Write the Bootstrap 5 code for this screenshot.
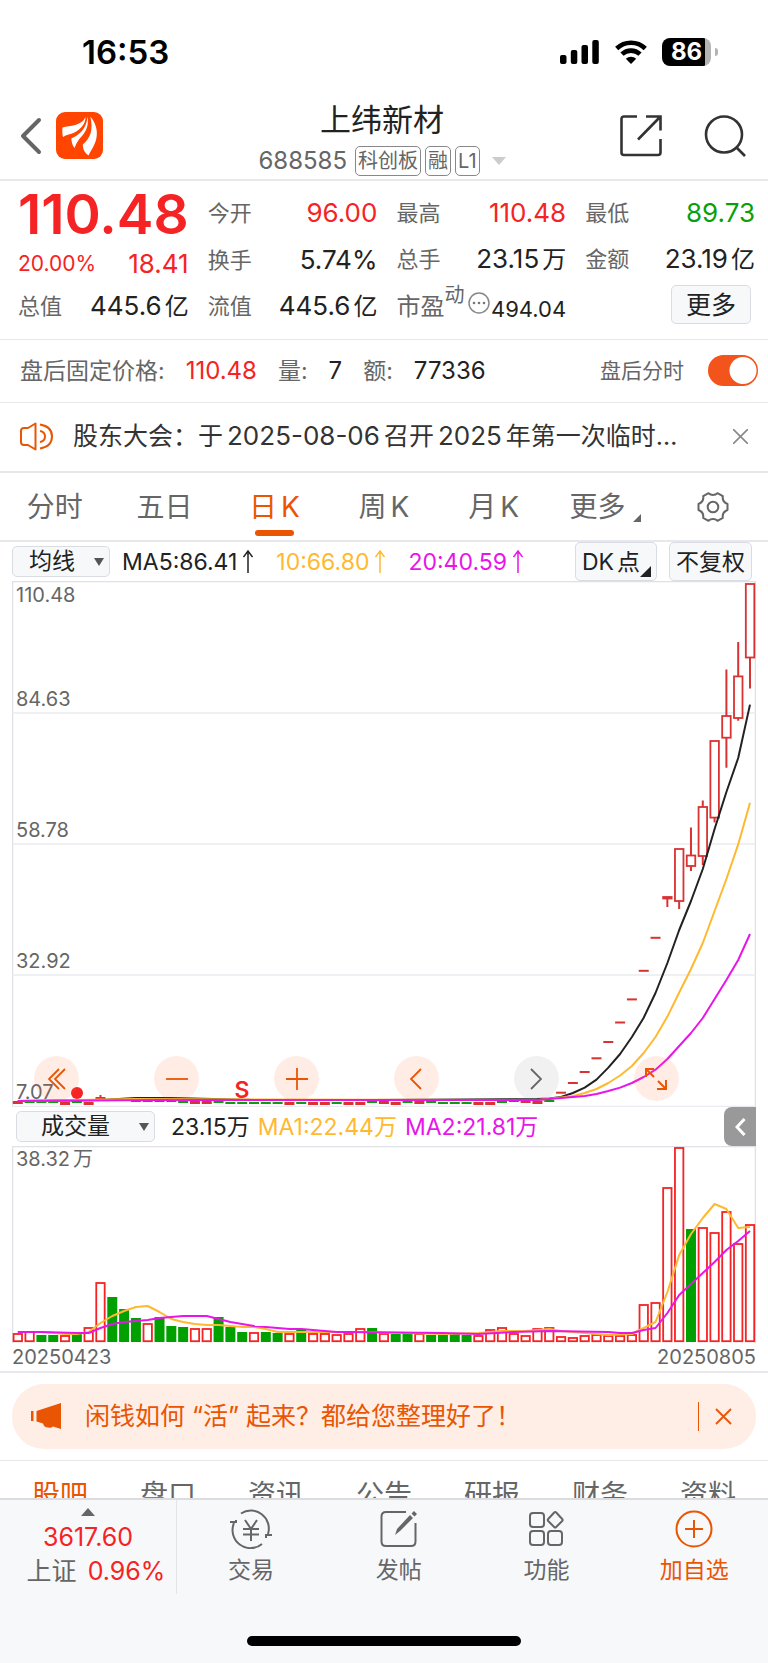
<!DOCTYPE html>
<html lang="zh-CN">
<head>
<meta charset="utf-8">
<meta name="viewport" content="width=device-width, initial-scale=1">
<title>上纬新材 688585</title>
<link rel="stylesheet" href="https://cdn.jsdelivr.net/npm/bootstrap@5.3.0/dist/css/bootstrap.min.css">
<style>
:root{--ink:#222;--grey:#666;--line:#e8e8ec;--up:#f52323;--down:#0a9f0a;--brand:#ea5504;--soft:#f7f8fa;--ma10:#ffb930;--ma20:#e815e8}
body{font-family:Inter,"Noto Sans CJK SC",sans-serif;font-size:23px;line-height:30px;color:var(--ink);background:#fff}
a{color:inherit;text-decoration:none}
svg{display:block;flex-shrink:0}
button,select{color:inherit;font:inherit}
.t-grey{color:var(--grey)}.t-up{color:var(--up)}.t-down{color:var(--down)}.t-brand{color:var(--brand)}
.t-ma10{color:var(--ma10)}.t-ma20{color:var(--ma20)}
.fs-s{font-size:20px}.fs-xm{font-size:21px}.fs-m{font-size:22px}.fs-n{font-size:24px}.fs-l{font-size:25px}
.unit{margin-left:3px}
.rule{border-bottom:1px solid var(--line)}
.rule-2{border-bottom:2px solid var(--line)}
.plain{background:none;border:0;padding:0}
.scroller{flex:1 1 0;min-height:0;overflow-y:auto;scrollbar-width:none}
.scroller::-webkit-scrollbar{display:none}

.statusbar{padding:32px 50px 28px 82px;color:#000}
.clock{font-size:33px;font-weight:600;line-height:40px}
.battery{width:49px;height:28px;margin-left:15px;border-radius:8px;background:linear-gradient(90deg,#000 43px,#b4b4b4 43px);color:#fff;font-size:24px;font-weight:700;line-height:28px}
.battery-tip{width:3px;height:8px;border-radius:0 4px 4px 0;background:#b4b4b4}

.titlebar{padding:0 22px 3px 18px}
.side{flex:1 1 0;padding-top:12px;height:59px}
.stock-name{font-size:31px;line-height:40px;margin:0 0 6px;font-weight:400}
.tag{border:1px solid #888;border-radius:5px;font-size:20px;line-height:28px;padding:0 2px}

.quote{display:grid;grid-template-columns:repeat(4,1fr);column-gap:19px;grid-auto-rows:47px;padding:8px 13px 9px 18px;align-items:center}
.lead-price{grid-row:span 2;align-self:start}
.price{font-size:55px;font-weight:600;line-height:56px;height:63px;margin-top:-3px}
.lbl{font-size:22px;color:var(--grey)}
.val{font-size:26px}
.chip{background:var(--soft);border:1px solid #d9dce3;border-radius:5px}
.more-chip{width:80px;height:39px;font-size:25px;line-height:36px}

.after{padding:15px 10px 16px 20px}
.after .form-check-input{width:50px;height:31px;margin:0;border:0;box-shadow:none;background-color:#ccc}
.after .form-check-input:checked{background-color:#f2541b;background-size:auto;background-position:0 0;background-image:radial-gradient(circle at calc(100% - 15px) 50%,#fff 13px,transparent 14px)}
.after-values{gap:21px}

.notice{padding:18px 20px 20px}
.notice-text{margin:0 44px 0 20px;color:#333}
.notice-text span{font-size:26px;margin:0 4px}

.periods a{flex:1 1 0;font-size:28px;line-height:38px;padding:15px 0 14px;color:var(--grey);display:flex;justify-content:center;align-items:center;position:relative}
.periods .active{color:var(--brand)}
.periods .active::after{content:"";position:absolute;bottom:4px;width:39px;height:6px;border-radius:3px;background:var(--brand)}
.corner{width:0;height:0;border-left:8px solid transparent;border-bottom:8px solid currentColor}

.chartbox{padding:0 12px}
.pick{position:relative}
.pick select{appearance:none;height:31px;line-height:27px;padding:0 34px 0 16px;outline:0}
.pick .wide{padding:0 44px 0 24px}
.pick::after{content:"";position:absolute;right:6px;top:12px;border:5px solid transparent;border-top:8px solid #555;border-bottom:0;pointer-events:none}
.legend{gap:23px;margin-left:12px}
.legend span{display:flex;align-items:center;gap:6px}
.square{height:39px;padding:0 6px;position:relative}
.square .corner{position:absolute;right:5px;bottom:3px;border-left-width:11px;border-bottom-width:11px}
.plot{width:100%;height:auto}
.plot text{font-size:20px;fill:var(--grey)}
.tools{position:absolute;left:3%;right:10.4%;bottom:6px}
.tool{width:45px;height:45px;border-radius:50%;background:rgba(255,110,40,.12);color:var(--brand)}
.tool.off{background:rgba(120,120,120,.1);color:#666}
.flag{width:32px;height:39px;border-radius:8px 0 0 8px;background:#999;color:#fff;margin-left:auto}
.dates{line-height:20px;padding:4px 0}

.promo{margin:11px 12px;padding:17px 24px 18px 19px;border-radius:32px;background:#feeee6;color:var(--brand);font-size:25px}
.promo-text{margin-left:23px}
.promo-text span{margin:0 7px}
.promo i{width:1px;height:29px;background:var(--brand)}
.sections{padding:15px 6px;border-top:1px solid var(--line)}
.sections a{flex:1 1 0;text-align:center;font-size:28px;line-height:38px}

.dock{background:var(--soft);border-top:2px solid #dcdce0}
.index{flex:0 0 177px;border-right:1px solid #e2e4e8;padding:8px 0 6px;font-size:25px;line-height:34px;text-align:center}
.dock-item{flex:1 1 0;padding:9px 0 0;font-size:23px;line-height:34px;display:flex;flex-direction:column;align-items:center;gap:4px}
.home{width:274px;height:10px;border-radius:5px;background:#000;margin:42px auto 17px}
</style>
</head>
<body>
<div class="vh-100 d-flex flex-column">

<div class="statusbar d-flex align-items-center flex-shrink-0">
  <span class="clock me-auto">16:53</span>
  <svg width="39" height="24" viewBox="0 0 39 24"><rect y="15" width="6.500" height="9" rx="2"/><rect x="10.800" y="10" width="6.500" height="14" rx="2"/><rect x="21.500" y="5" width="6.500" height="19" rx="2"/><rect x="32.300" y="0" width="6.500" height="24" rx="2"/></svg>
  <svg class="ms-3" width="32" height="24" viewBox="0 0 32 24" fill="none" stroke="#000" stroke-width="4.600"><path d="M1.700 8.500a20.500 20.500 0 0 1 28.600 0M7 14.200a13 13 0 0 1 18 0"/><path d="M16 24l-5.200-5.200a7.500 7.500 0 0 1 10.400 0z" fill="#000" stroke="none"/></svg>
  <span class="battery text-center">86</span><span class="battery-tip ms-1"></span>
</div>

<header class="titlebar rule-2 d-flex align-items-start flex-shrink-0">
  <div class="side d-flex align-items-center">
    <button class="plain" aria-label="返回"><svg width="24" height="38" viewBox="0 0 24 38" fill="none" stroke="#666" stroke-width="4" stroke-linecap="round" stroke-linejoin="round"><path d="M21 3L5 19l16 16"/></svg></button>
    <a href="#" aria-label="首页" style="margin-left:14px"><svg width="47" height="47" viewBox="0 0 47 47"><rect width="47" height="47" rx="9" fill="#ff4500"/><g fill="#fff"><path d="M6.500 15.500C14 13.500 25.500 14 29.500 5c.3 6-4 12-12 16-4 1.500-8 2-10.500 4-.8-3-.8-6.500-.5-9.500z"/><path d="M31.500 4.500c1.500 9-1.500 15-5.500 19.500-3 3-5 6-7.500 12-2-2.500-3-6-3.200-9.500C22 23.500 30.500 18 31.500 4.500z"/><path d="M34.300 4.500c4.500 5 7.700 13 6.200 21-1 6.500-5 12-8 18-3.500-2.500-5.700-6-5.700-11C34.500 26 37.500 18 34.300 4.500z"/></g></svg></a>
  </div>
  <div>
    <h1 class="stock-name text-center">上纬新材</h1>
    <div class="d-flex align-items-center gap-1 t-grey">
      <span class="fs-n me-1">688585</span><span class="tag">科创板</span><span class="tag">融</span><span class="tag">L1</span>
      <svg class="ms-2" width="14" height="8" viewBox="0 0 14 8"><path d="M0 0h14L7 8z" fill="#ccc"/></svg>
    </div>
  </div>
  <div class="side d-flex align-items-center justify-content-end">
    <button class="plain" aria-label="分享"><svg width="42" height="42" viewBox="0 0 42 42" fill="none" stroke="#333" stroke-width="2.600"><path d="M17 1.500H4Q1.500 1.500 1.500 4v33.500Q1.500 40 4 40h34q2.500 0 2.500-2.500V24M26 1.500h14.500v14M40 2L18 24.500"/></svg></button>
    <button class="plain" aria-label="搜索" style="margin-left:42px"><svg width="42" height="42" viewBox="0 0 42 42" fill="none" stroke="#333" stroke-width="2.600"><circle cx="20" cy="19.500" r="18"/><path d="M32 32l9 9"/></svg></button>
  </div>
</header>

<main class="scroller">
<section class="quote rule">
  <div class="lead-price">
    <div class="price t-up">110.48</div>
    <div class="d-flex justify-content-between align-items-center t-up"><span class="fs-xm">20.00%</span><span class="val">18.41</span></div>
  </div>
  <div class="d-flex justify-content-between"><span class="lbl">今开</span><span class="val t-up">96.00</span></div>
  <div class="d-flex justify-content-between"><span class="lbl">最高</span><span class="val t-up">110.48</span></div>
  <div class="d-flex justify-content-between"><span class="lbl">最低</span><span class="val t-down">89.73</span></div>
  <div class="d-flex justify-content-between"><span class="lbl">换手</span><span class="val">5.74%</span></div>
  <div class="d-flex justify-content-between"><span class="lbl">总手</span><span class="val">23.15<span class="unit fs-n">万</span></span></div>
  <div class="d-flex justify-content-between"><span class="lbl">金额</span><span class="val">23.19<span class="unit fs-n">亿</span></span></div>
  <div class="d-flex justify-content-between"><span class="lbl">总值</span><span class="val">445.6<span class="unit fs-n">亿</span></span></div>
  <div class="d-flex justify-content-between"><span class="lbl">流值</span><span class="val">445.6<span class="unit fs-n">亿</span></span></div>
  <div class="d-flex align-items-center"><span class="t-grey fs-n">市盈</span><span class="t-grey fs-s lh-1 mb-4">动</span>
    <svg class="ms-1 mb-2" width="22" height="22" viewBox="0 0 22 22"><circle cx="11" cy="11" r="10" fill="none" stroke="#888" stroke-width="1.500"/><g fill="#777"><circle cx="6" cy="11" r="1.300"/><circle cx="11" cy="11" r="1.300"/><circle cx="16" cy="11" r="1.300"/></g></svg>
    <span class="ms-auto fs-m mt-1">494.04</span></div>
  <div class="text-end pb-1"><button class="chip more-chip p-0 me-1">更多</button></div>
</section>

<section class="after rule d-flex align-items-center">
  <div class="after-values d-flex">
    <span class="t-grey">盘后固定价格:</span><span class="fs-n t-up">110.48</span>
    <span class="t-grey">量:</span><span class="fs-n">7</span>
    <span class="t-grey">额:</span><span class="fs-n">77336</span>
  </div>
  <label class="fs-xm t-grey ms-auto me-4" for="afterTrend">盘后分时</label>
  <div class="form-switch p-0 lh-1"><input class="form-check-input float-none" type="checkbox" role="switch" id="afterTrend" checked></div>
</section>

<section class="notice rule-2 d-flex align-items-center">
  <svg width="33" height="29" viewBox="0 0 33 29" fill="none" stroke="#ea5504" stroke-width="2"><path d="M15.500 1.500v26L8 23H4q-3 0-3-3V9q0-3 3-3h4z" stroke-linejoin="round"/><path d="M20 9q5 1 5 5.500T20 20M20 2.500q12 2 12 12t-12 12"/></svg>
  <a href="#" class="notice-text fs-l text-truncate">股东大会：于<span>2025-08-06</span>召开<span>2025</span>年第一次临时股东大会</a>
  <button class="plain ms-auto" aria-label="关闭"><svg width="15" height="15" viewBox="0 0 15 15" stroke="#888" stroke-width="1.600"><path d="M0 0l15 15M15 0L0 15"/></svg></button>
</section>

<nav class="periods rule-2 d-flex">
  <a href="#">分时</a><a href="#">五日</a><a href="#" class="active" aria-current="page">日<span class="ms-1">K</span></a><a href="#">周<span class="ms-1">K</span></a><a href="#">月<span class="ms-1">K</span></a>
  <a href="#"><span class="ms-1">更多</span><span class="corner align-self-end mb-1 ms-2"></span></a>
  <a href="#" aria-label="设置"><svg width="32" height="32" viewBox="0 0 32 32" fill="none" stroke="#666" stroke-width="2" stroke-linejoin="round"><circle cx="16" cy="16" r="5.300"/><path d="M11.500 2.200C14 4.500 18 4.500 20.500 2.200l5.300 2.900c-.6 4 1 6.500 4.700 7.900v6c-3.700 1.400-5.300 3.900-4.700 7.900l-5.300 2.900c-2.500-2.300-6.500-2.300-9 0l-5.300-2.900c.6-4-1-6.500-4.700-7.900v-6c3.700-1.400 5.300-3.900 4.700-7.900z"/></svg></a>
</nav>

<section class="chartbox">
  <div class="d-flex align-items-center">
    <span class="pick"><select class="chip" aria-label="主图指标"><option>均线</option></select></span>
    <div class="legend d-flex">
      <span>MA5:86.41<svg width="10" height="23" viewBox="0 0 10 23" fill="none" stroke="currentColor" stroke-width="1.500"><path d="M5 23V1M.5 7L5 1l4.500 6"/></svg></span>
      <span class="t-ma10">10:66.80<svg width="10" height="23" viewBox="0 0 10 23" fill="none" stroke="currentColor" stroke-width="1.500"><path d="M5 23V1M.5 7L5 1l4.500 6"/></svg></span>
      <span class="t-ma20">20:40.59<svg width="10" height="23" viewBox="0 0 10 23" fill="none" stroke="currentColor" stroke-width="1.500"><path d="M5 23V1M.5 7L5 1l4.500 6"/></svg></span>
    </div>
    <button class="chip square ms-auto pe-3">DK<span class="unit">点</span><span class="corner"></span></button>
    <button class="chip square me-1" style="margin-left:12px">不复权</button>
  </div>
  <div class="position-relative">
    <svg class="plot" id="kline" viewBox="0 0 744 526"></svg>
    <div class="tools d-flex justify-content-between">
      <button class="plain tool d-flex align-items-center justify-content-center" aria-label="最早"><svg width="18" height="22" viewBox="0 0 18 22" fill="none" stroke="currentColor" stroke-width="1.800"><path d="M11 1L1 11l10 10M17 1L7 11l10 10"/></svg></button>
      <button class="plain tool d-flex align-items-center justify-content-center" aria-label="缩小"><svg width="22" height="22" viewBox="0 0 22 22" stroke="currentColor" stroke-width="1.800"><path d="M0 11h22"/></svg></button>
      <button class="plain tool d-flex align-items-center justify-content-center" aria-label="放大"><svg width="22" height="22" viewBox="0 0 22 22" stroke="currentColor" stroke-width="1.800"><path d="M0 11h22M11 0v22"/></svg></button>
      <button class="plain tool d-flex align-items-center justify-content-center" aria-label="向前"><svg width="12" height="22" viewBox="0 0 12 22" fill="none" stroke="currentColor" stroke-width="1.800"><path d="M11 1L1 11l10 10"/></svg></button>
      <button class="plain tool off d-flex align-items-center justify-content-center" aria-label="向后"><svg width="12" height="22" viewBox="0 0 12 22" fill="none" stroke="currentColor" stroke-width="1.800"><path d="M1 1l10 10L1 21"/></svg></button>
      <button class="plain tool d-flex align-items-center justify-content-center" aria-label="全屏"><svg width="22" height="22" viewBox="0 0 22 22" fill="none" stroke="currentColor" stroke-width="2"><path d="M9 9L1 1M1 9V1h8M13 13l8 8M21 12v9h-9"/></svg></button>
    </div>
  </div>
  <div class="d-flex align-items-center">
    <span class="pick ms-1"><select class="chip wide" aria-label="副图指标"><option>成交量</option></select></span>
    <span class="ms-3">23.15万</span><span class="t-ma10 ms-2">MA1:22.44万</span><span class="t-ma20 ms-2">MA2:21.81万</span>
    <button class="plain flag d-flex align-items-center justify-content-center" aria-label="展开"><svg width="11" height="18" viewBox="0 0 11 18" fill="none" stroke="currentColor" stroke-width="3"><path d="M9.500 1L2 9l7.500 8"/></svg></button>
  </div>
  <svg class="plot" id="volume" viewBox="0 0 744 197"></svg>
  <div class="dates d-flex justify-content-between fs-s t-grey"><span>20250423</span><span>20250805</span></div>
</section>
<div class="rule-2"></div>

<div class="promo d-flex align-items-center">
  <svg width="31" height="26" viewBox="0 0 31 26" fill="#ea5504"><path d="M0 8h2.500v10H0zM5.500 8L30 0v26l-8-2.500q-2 2-5 1-4 0-5-4l-6.500-2z"/></svg>
  <a href="#" class="promo-text">闲钱如何<span>“活”</span>起来？都给您整理好了！</a>
  <i class="ms-auto"></i>
  <button class="plain ms-3" aria-label="关闭提示"><svg width="17" height="17" viewBox="0 0 17 17" stroke="#ea5504" stroke-width="1.800"><path d="M1 1l15 15M16 1L1 16"/></svg></button>
</div>

<nav class="sections d-flex t-grey"><a href="#" class="t-brand">股吧</a><a href="#">盘口</a><a href="#">资讯</a><a href="#">公告</a><a href="#">研报</a><a href="#">财务</a><a href="#">资料</a></nav>
</main>

<footer class="dock flex-shrink-0">
  <div class="d-flex t-grey">
    <a href="#" class="index"><svg class="mx-auto mb-1" width="14" height="8" viewBox="0 0 14 8"><path d="M0 8h14L7 0z" fill="#666"/></svg>
      <span class="t-up d-block">3617.60</span><span class="d-block ps-3">上证 <span class="t-up ms-1">0.96%</span></span></a>
    <button class="plain dock-item"><svg width="42" height="40" viewBox="0 0 42 40" fill="none" stroke="#666" stroke-width="2"><path d="M11 4.500A18 18 0 0 1 38 25M32 35A18 18 0 0 1 4 14M0 13h6v-2M42 26h-6v3M15 11l6 9 6-9M13 20h16M13 25.500h16M21 20v12"/></svg>交易</button>
    <button class="plain dock-item"><svg width="40" height="40" viewBox="0 0 40 40" fill="none" stroke="#666" stroke-width="2"><path d="M27 3H7Q2.500 3 2.500 7.500v25Q2.500 37 7 37h25q4.500 0 4.500-4.500V14"/><path d="M16 26l2-6L31 6l3 3-13 13zM32.500 4.500L35 2l3 3-2.500 2.500z" fill="#666" stroke="none"/></svg>发帖</button>
    <button class="plain dock-item"><svg width="40" height="40" viewBox="0 0 40 40" fill="none" stroke="#666" stroke-width="2"><rect x="4" y="4" width="14" height="14" rx="3"/><rect x="4" y="22" width="14" height="14" rx="3"/><rect x="22" y="22" width="14" height="14" rx="3"/><path d="M28.200 3.500q1-1 2 0l6 6.500q1 1 0 2l-6 6q-1 1-2 0l-6-6q-1-1 0-2z"/></svg>功能</button>
    <button class="plain dock-item t-brand"><svg width="40" height="40" viewBox="0 0 40 40" fill="none" stroke="#ea5504" stroke-width="2"><circle cx="20" cy="20" r="17.500"/><path d="M20 11v18M11 20h18"/></svg>加自选</button>
  </div>
  <div class="home"></div>
</footer>
</div>

<script src="https://cdn.jsdelivr.net/npm/bootstrap@5.3.0/dist/js/bootstrap.bundle.min.js"></script>
<script>
const RED='#d93232', GREEN='#0a9f0a', x=i=>5.8+11.81*i;
const line=(pts,c)=>`<polyline fill="none" stroke="${c}" stroke-width="2" stroke-linejoin="round" points="${pts.map(([i,y])=>x(i).toFixed(1)+','+y).join(' ')}"/>`;
const frame=h=>`<path d="M.5 ${h}V.5H743.500V${h}" fill="none" stroke="#e0e0e6" stroke-width="1.500"/>`;
const from=(i,ys)=>ys.map((y,k)=>[i+k,y]);

// Daily candles: the quiet months trade flat just above the lower bound
let k=frame(526)+'<g stroke="#eaebf0" stroke-width="1.500"><path d="M0 132H744M0 263H744M0 394H744M0 525.500H744"/></g>';
const quiet='rgggrgrrgggggggrrggggggrgrrgrrgrrgrggggrrggrrg';
const level=[521,521,521,521,522,521,522,517,519,519,520,520,520,520,521,521,521,521,522,522,522,522,522,522,522,522,522,522,522,522,521,521,522,521,521,521,522,522,522,522,522,521,520,520,521,520];
level.forEach((y,i)=>{const r=quiet[i]=='r';k+=`<rect x="${x(i)-5}" y="${y-1}" width="10" height="${r?3:2}" fill="${r?RED:GREEN}"/>`});
k+=`<path d="M${x(7)} 514v4" stroke="${RED}" stroke-width="2"/>`;
[511.7,502,491,477.3,461,441.5,418.4,389.8,356.8].forEach((y,n)=>k+=`<rect x="${x(46+n)-5}" y="${y-1}" width="10" height="2" fill="${RED}"/>`);
// [high, body top, body bottom, low]
[[316,316,317.5,326],[268,268,320,328],[246.6,274.5,285,290],[219.4,226,275,284],[160,160,236.6,241.4],[88.5,135,156.7,186.7],[61,95.4,137,139.8],[3,3,76.5,107.5]].forEach(([h,t,b,l],n)=>{
  const c=x(55+n);k+=`<path d="M${c} ${h}V${t}M${c} ${b}V${l}" stroke="${RED}" stroke-width="2"/><rect x="${c-4.2}" y="${t}" width="8.500" height="${b-t}" fill="#fff" stroke="${RED}" stroke-width="1.800"/>`});
k+=line([[0,520],[7,519],[10,517],[13,517],[20,519],[30,519],[44,518],...from(45,[517.6,516,512,506.6,498.6,486.6,473,456,436.7,412,382,349,320,288,248,211,177,123.6])],'#222');
k+=line([[0,520],[10,518],[20,518.5],[44,519],...from(46,[516.5,515,512,508,502,494.5,485,472,456,435.6,411.5,388,362,330,298,263.4,221.8])],'#ffb930');
k+=line([[0,520],[12,519],[30,519],[44,519],...from(46,[517,516,515,513,510,506.6,502,496,488.7,478,465,452,437,418,399,379,353])],'#e815e8');
[[21,'110.48'],[125,'84.63'],[256,'58.78'],[387,'32.92'],[518,'7.07']].forEach(([y,t])=>k+=`<text x="4" y="${y}">${t}</text>`);
k+='<circle cx="65" cy="512" r="6" fill="#f52323"/><text x="230" y="517" text-anchor="middle" style="font-size:23px;font-weight:600;fill:#f52323">S</text>';
document.getElementById('kline').innerHTML=k;

// Volume bars with their two moving averages
const vol=[9,11,7,7,7,8,15,60,45,33,24,19,25,16,15,14,14,25,15,10,10,10,9,9,12,9,9,8,9,14,14,9,8,9,9,7,7,8,7,7,13,15,9,7,14,15,6,5,7,8,7,7,8,38,40,155,195,113,115,110,131,99,118];
const falls=[2,3,5,8,9,10,12,13,14,17,18,19,21,22,24,30,32,33,35,36,37,38,57];
let v=frame(197);
vol.forEach((h,i)=>{v+=falls.includes(i)?`<rect x="${x(i)-5}" y="${196-h}" width="10" height="${h}" fill="#00a000"/>`:`<rect x="${x(i)-4.2}" y="${197-h}" width="8.400" height="${h-1.8}" fill="#fff" stroke="#f52323" stroke-width="1.800"/>`});
const up=pts=>pts.map(([i,h])=>[i,196-h]);
v+=line(up([...from(0,[10,10,10,9,8,8,10,19,26,31,35,36,30,23,20,18,17,17,16,15,15,13,10,10,10]),[30,10],[36,8],[39,9],[41,11],[43,11],[45,13],[46,11],[48,9],[50,7],...from(52,[8,14,20,50,87,108,124,138,133,114,115])]),'#ffb930');
v+=line(up([[0,10],[2,10],...from(5,[9,9,14,18,20,21,22,24,25,26,26,26,23,20,18,16,15,14,13,13,12,11,10,10]),[36,9],[39,8],[42,10],[45,11],[50,10],...from(51,[9,9,12,14,29,47,58,69,80,92,101,111])]),'#e815e8');
v+='<text x="4" y="20">38.32<tspan dx="3">万</tspan></text>';
document.getElementById('volume').innerHTML=v;
</script>
</body>
</html>
